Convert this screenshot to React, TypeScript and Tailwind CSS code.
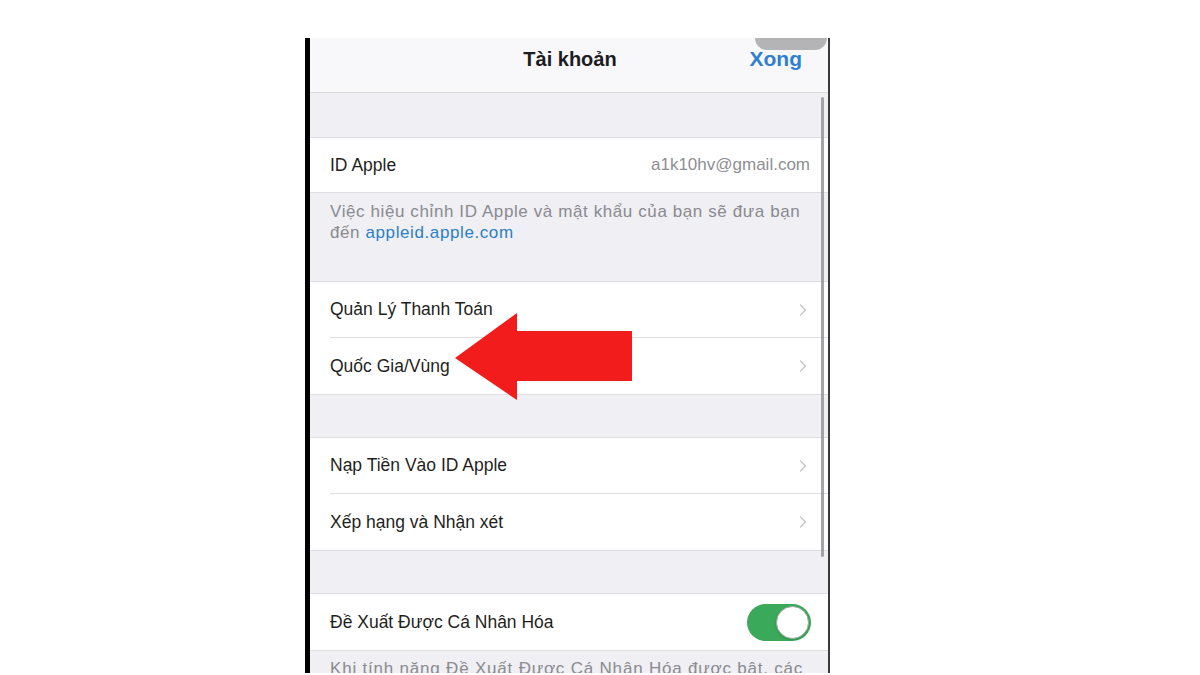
import { ChevronRight } from 'lucide-react';

const font = { fontFamily: '"Liberation Sans", Arial, sans-serif' };

function Row({ label, chevron = true, right, last = false }: { label: string; chevron?: boolean; right?: React.ReactNode; last?: boolean }) {
  return (
    <div className="h-[56px] pl-[20px] bg-white">
      <div className={`h-full flex items-center pr-[18px] ${last ? '' : 'border-b border-[#dedee2]'}`}>
        <span className="flex-1 text-[17.5px] text-[#1f1f22]">{label}</span>
        {right}
        {chevron && <ChevronRight size={20} strokeWidth={1.6} className="text-[#c5c5ca] -mr-[3px]" />}
      </div>
    </div>
  );
}

function Toggle() {
  return (
    <div className="w-[64px] h-[37px] rounded-full bg-[#3aa95a] p-[2px] flex justify-end -mr-[1px]">
      <div className="w-[33px] h-[33px] rounded-full bg-white border border-[#9aa89e] shadow" />
    </div>
  );
}

export default function App() {
  return (
    <div className="w-[1200px] h-[675px] bg-white overflow-hidden relative" style={font}>
      <div className="pt-[38px] pl-[305px] flex">
        <div className="w-[5px] h-[635px] bg-black" />
        <div className="w-[518px] h-[635px] bg-[#efeff4] relative overflow-hidden">
          {/* Nav bar */}
          <div className="h-[55px] bg-[#f8f8fa] border-b border-[#d9d9dd] flex items-center relative">
            <div className="flex-1 text-center text-[20px] font-semibold text-[#1d1d1f] pl-[2px] -mt-[12px]">Tài khoản</div>
            <div className="absolute right-[26px] top-[5px] text-[21px] font-semibold text-[#2f7fce]">Xong</div>
          </div>
          <div className="h-[44px]" />

          {/* ID Apple */}
          <div className="border-t border-[#dedee2] border-b">
            <div className="h-[54px] bg-white pl-[20px] pr-[18px] flex items-center">
              <span className="flex-1 text-[17.5px] text-[#1f1f22]">ID Apple</span>
              <span className="text-[17px] text-[#8e8e93]">a1k10hv@gmail.com</span>
            </div>
          </div>
          <div className="h-[88px] px-[20px] pt-[8px] text-[17px] leading-[21px] tracking-[0.6px] text-[#8a8a8f] whitespace-nowrap">
            Việc hiệu chỉnh ID Apple và mật khẩu của bạn sẽ đưa bạn
            <br />
            đến <span className="text-[#2c7fc6]">appleid.apple.com</span>
          </div>

          {/* Payments */}
          <div className="border-t border-b border-[#dedee2]">
            <Row label="Quản Lý Thanh Toán" />
            <Row label="Quốc Gia/Vùng" last />
          </div>
          <div className="h-[42px]" />

          <div className="border-t border-b border-[#dedee2]">
            <Row label="Nạp Tiền Vào ID Apple" />
            <Row label="Xếp hạng và Nhận xét" last />
          </div>
          <div className="h-[42px]" />

          <div className="border-t border-b border-[#dedee2]">
            <div className="h-[56px] bg-white pl-[20px] pr-[18px] flex items-center">
              <span className="flex-1 text-[17.5px] text-[#1f1f22]">Đề Xuất Được Cá Nhân Hóa</span>
              <Toggle />
            </div>
          </div>
          <div className="px-[20px] pt-[7px] text-[17px] leading-[21px] tracking-[0.8px] text-[#8a8a8f] whitespace-nowrap">
            Khi tính năng Đề Xuất Được Cá Nhân Hóa được bật, các
          </div>

          {/* scroll indicator */}
          <div className="absolute right-[4px] top-[59px] w-[3px] h-[460px] rounded-full bg-[#8e8e93]/80" />
        </div>
        <div className="w-[2px] h-[635px] bg-[#3a3a3c]" />
      </div>

      {/* top pill overlay */}
      <div className="absolute left-[755px] top-[38px] w-[72px] h-[12px] rounded-b-[12px] bg-[#b4b4b6]" />

      {/* red arrow */}
      <svg className="absolute left-[450px] top-[308px]" width="190" height="100" viewBox="450 308 190 100">
        <polygon points="455,358 517,313 517,331 632,331 632,381 517,381 517,400" fill="#f31c1c" />
      </svg>
    </div>
  );
}
